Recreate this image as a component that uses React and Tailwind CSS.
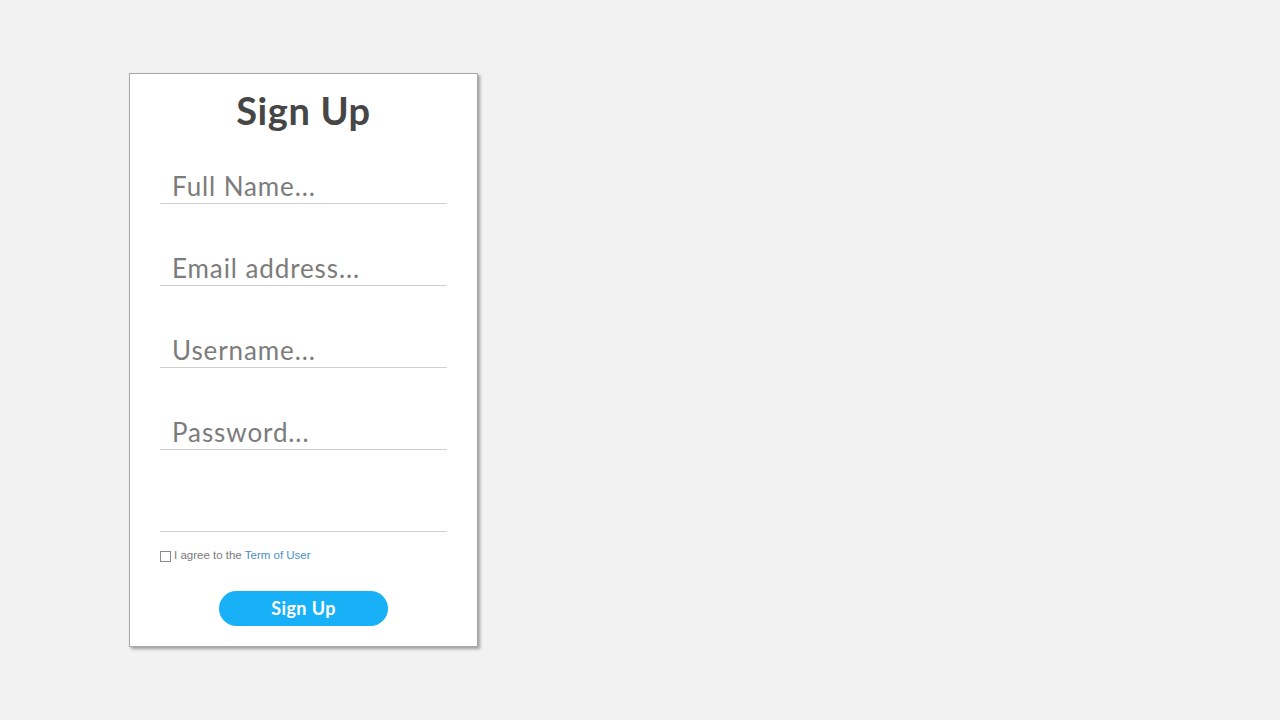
const fields = ["Full Name...", "Email address...", "Username...", "Password...", ""];

export default function App() {
  return (
    <div className="min-h-screen bg-[#f2f2f2] pl-[129px] pt-[73px]" style={{ fontFamily: "Lato, 'Noto Sans', sans-serif" }}>
      <div className="w-[349px] h-[574px] bg-white border border-[#a8a8a8] shadow-[2px_2px_3px_rgba(0,0,0,0.35)] px-[30px] pt-[13px]">
        <h1 className="text-center text-[38px] leading-[46px] font-bold tracking-[0.6px] text-[#464646]">Sign Up</h1>
        <div className="mt-[30px] flex flex-col gap-[41px]">
          {fields.map((f, i) => (
            <input
              key={i}
              type="text"
              placeholder={f}
              className="h-[41px] w-[287px] border-b border-[#cfcfcf] pl-[12px] pt-[6px] text-[26px] tracking-[0.9px] text-[#777] placeholder:text-[#7c7c7c] outline-none bg-transparent"
            />
          ))}
        </div>
        <div className="mt-[17px] flex items-center gap-[2px] h-[14px] text-[11.5px] text-[#7a7a7a]" style={{ fontFamily: "'Liberation Sans', Arial, sans-serif" }}>
          <span className="w-[11px] h-[11px] border border-[#8a8a8a] mr-[1px]"></span>
          <span>I agree to the <a className="text-[#4a8fc7]">Term of User</a></span>
        </div>
        <div className="mt-[28px] flex justify-center">
          <button className="w-[169px] h-[35px] rounded-full bg-[#18b0f6] text-white text-[18px] font-bold tracking-[0.4px]">Sign Up</button>
        </div>
      </div>
    </div>
  );
}
